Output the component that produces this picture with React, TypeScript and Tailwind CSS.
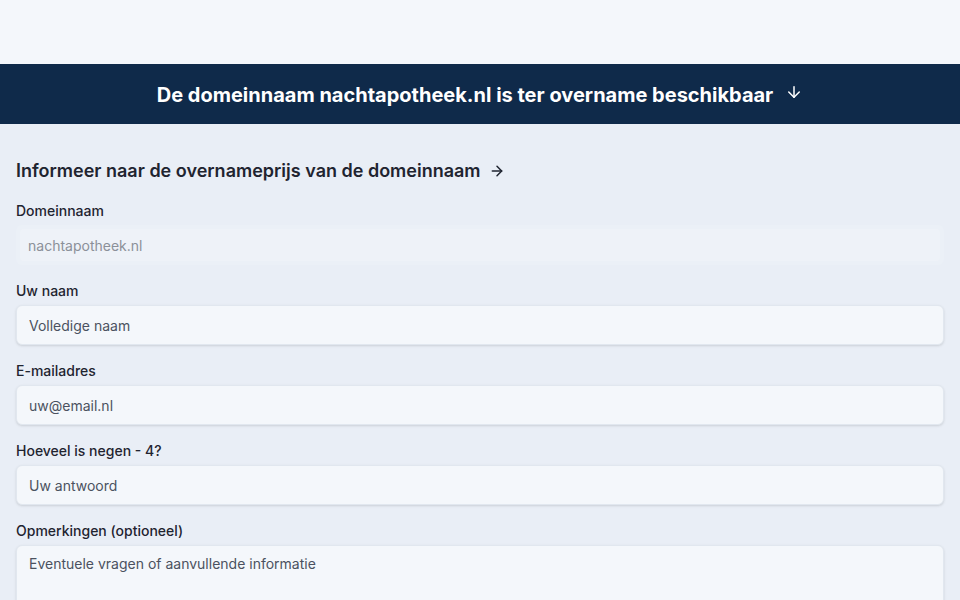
import { ArrowDown, ArrowRight } from 'lucide-react'

const fields = [
  { label: 'Uw naam', placeholder: 'Volledige naam' },
  { label: 'E-mailadres', placeholder: 'uw@email.nl' },
  { label: 'Hoeveel is negen - 4?', placeholder: 'Uw antwoord' },
]

export default function App() {
  return (
    <div className="min-h-screen bg-[#e9eef6] font-['Inter',sans-serif] text-[#1f2430]">
      <div className="h-16 bg-[#f4f7fb]" />
      <div className="flex h-[60px] items-center justify-center gap-3 bg-[#0f2a4a]">
        <h1 className="pt-px text-xl font-bold leading-7 text-white">De domeinnaam nachtapotheek.nl is ter overname beschikbaar</h1>
        <ArrowDown className="-mt-1 h-[18px] w-[18px] text-white" strokeWidth={2} />
      </div>

      <div className="px-4 pt-[33px]">
        <h2 className="flex items-center gap-2 text-lg font-semibold leading-7">
          Informeer naar de overnameprijs van de domeinnaam
          <ArrowRight className="h-4 w-4" strokeWidth={2.25} />
        </h2>

        <form className="mt-4 flex flex-col gap-4">
          <div>
            <label className="block text-sm font-medium leading-5">Domeinnaam</label>
            <div className="mt-1 rounded-md bg-[#ebf0f7] p-[4px]">
              <input
                disabled
                value="nachtapotheek.nl"
                className="h-[32px] w-full rounded bg-[#eef2f8] px-2 text-sm text-[#8b9099] outline-none"
              />
            </div>
          </div>

          {fields.map(f => (
            <div key={f.label}>
              <label className="block text-sm font-medium leading-5">{f.label}</label>
              <input
                placeholder={f.placeholder}
                className="mt-1 h-10 w-full rounded-md border border-[#e1e7ef] bg-[#f4f7fb] px-3 text-sm text-[#4b5260] shadow-sm outline-none placeholder:text-[#4b5260]"
              />
            </div>
          ))}

          <div>
            <label className="block text-sm font-medium leading-5">Opmerkingen (optioneel)</label>
            <textarea
              rows={4}
              placeholder="Eventuele vragen of aanvullende informatie"
              className="mt-1 w-full resize-none rounded-md border border-[#e1e7ef] bg-[#f4f7fb] px-3 py-2 text-sm text-[#4b5260] shadow-sm outline-none placeholder:text-[#4b5260]"
            />
          </div>
        </form>
      </div>
    </div>
  )
}
